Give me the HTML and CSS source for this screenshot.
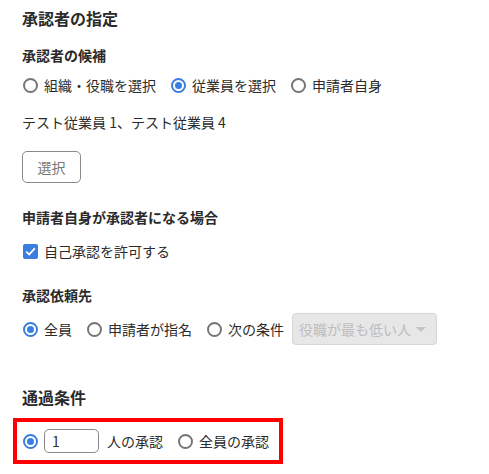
FILE: index.html
```html
<!DOCTYPE html>
<html lang="ja">
<head>
<meta charset="utf-8">
<link rel="stylesheet" href="styles.css">
</head>
<body>
<div class="page">
  <h1 class="title">承認者の指定</h1>

  <h2 class="label l-cand">承認者の候補</h2>
  <div class="row r-cand">
    <label class="opt"><span class="radio"></span>組織・役職を選択</label>
    <label class="opt"><span class="radio on"></span>従業員を選択</label>
    <label class="opt"><span class="radio"></span>申請者自身</label>
  </div>
  <p class="text">テスト従業員 1、テスト従業員 4</p>
  <button class="btn" type="button">選択</button>

  <h2 class="label l-self">申請者自身が承認者になる場合</h2>
  <div class="row r-self">
    <label class="opt"><span class="check"><svg width="11" height="9" viewBox="0 0 11 9"><path d="M1.2 4.6 L4.2 7.4 L9.8 1.4" fill="none" stroke="#fff" stroke-width="1.8"/></svg></span>自己承認を許可する</label>
  </div>

  <h2 class="label l-req">承認依頼先</h2>
  <div class="row r-req">
    <label class="opt"><span class="radio on"></span>全員</label>
    <label class="opt"><span class="radio"></span>申請者が指名</label>
    <label class="opt cond"><span class="radio"></span>次の条件</label>
    <div class="select"><span>役職が最も低い人</span><span class="caret"></span></div>
  </div>

  <h1 class="title t-pass">通過条件</h1>
  <div class="hl">
    <label class="opt"><span class="radio on"></span><span class="num">1</span>人の承認</label>
    <label class="opt"><span class="radio"></span>全員の承認</label>
  </div>
</div>
</body>
</html>
```

FILE: styles.css
```css
* { box-sizing: border-box; }
html, body { margin: 0; padding: 0; background: #fff; }
body {
  font-family: "Noto Sans CJK JP", "Noto Sans", sans-serif;
  color: #2b2b2b;
  font-size: 14px;
}
.page { padding: 6px 0 0 22px; }
.title {
  margin: 0;
  font-size: 16px;
  font-weight: 700;
  line-height: 24px;
  height: 24px;
}
.label {
  margin: 0;
  font-size: 14px;
  font-weight: 700;
  line-height: 20px;
  height: 20px;
}
.l-cand { margin-top: 15px; }
.l-self { margin-top: 24px; }
.l-req { margin-top: 24px; }
.row {
  display: flex;
  align-items: center;
  height: 20px;
  gap: 15px;
}
.r-cand { margin-top: 10px; margin-left: 1px; }
.r-self { margin-top: 14px; margin-left: 1px; }
.r-req { margin-top: 8px; height: 32px; margin-left: 1px; gap: 15px; }
.opt {
  display: flex;
  align-items: center;
  gap: 6px;
  line-height: 20px;
  white-space: nowrap;
}
.cond { margin-right: -7px; }
.radio {
  width: 15px;
  height: 15px;
  border-radius: 50%;
  border: 2px solid #767676;
  background: #fff;
  display: inline-block;
  flex: none;
  position: relative;
}
.radio.on { border-color: #3a7ee0; }
.radio.on::after {
  content: "";
  position: absolute;
  left: 2px; top: 2px;
  width: 7px; height: 7px;
  border-radius: 50%;
  background: #3a7ee0;
}
.check {
  width: 15px;
  height: 15px;
  border-radius: 2px;
  background: #3a7ee0;
  display: inline-flex;
  align-items: center;
  justify-content: center;
  flex: none;
}
.text {
  margin: 17px 0 0;
  line-height: 20px;
  height: 20px;
}
.btn {
  display: block;
  margin-top: 19px;
  width: 59px;
  height: 32px;
  border: 1px solid #8a8a8a;
  border-radius: 5px;
  background: #fff;
  color: #777;
  font: inherit;
  font-size: 14px;
  padding: 0;
}
.select {
  width: 145px;
  height: 32px;
  border: 1px solid #d6d6d6;
  border-radius: 4px;
  background: #e7e7e7;
  color: #bdbdbd;
  display: flex;
  align-items: center;
  justify-content: space-between;
  padding: 0 10px 0 6px;
}
.caret {
  width: 0; height: 0;
  border-left: 5px solid transparent;
  border-right: 5px solid transparent;
  border-top: 5px solid #c4c4c4;
}
.t-pass { margin-top: 40px; }
.hl {
  margin: 9px 0 0 -9px;
  width: 270px;
  height: 46px;
  border: 4px solid #f00;
  display: flex;
  align-items: center;
  gap: 15px;
  padding-left: 6px;
}
.num {
  display: inline-block;
  width: 55px;
  height: 24px;
  border: 1px solid #888;
  border-radius: 5px;
  padding-left: 7px;
  line-height: 22px;
  margin-right: 2px;
  color: #333;
}
```
